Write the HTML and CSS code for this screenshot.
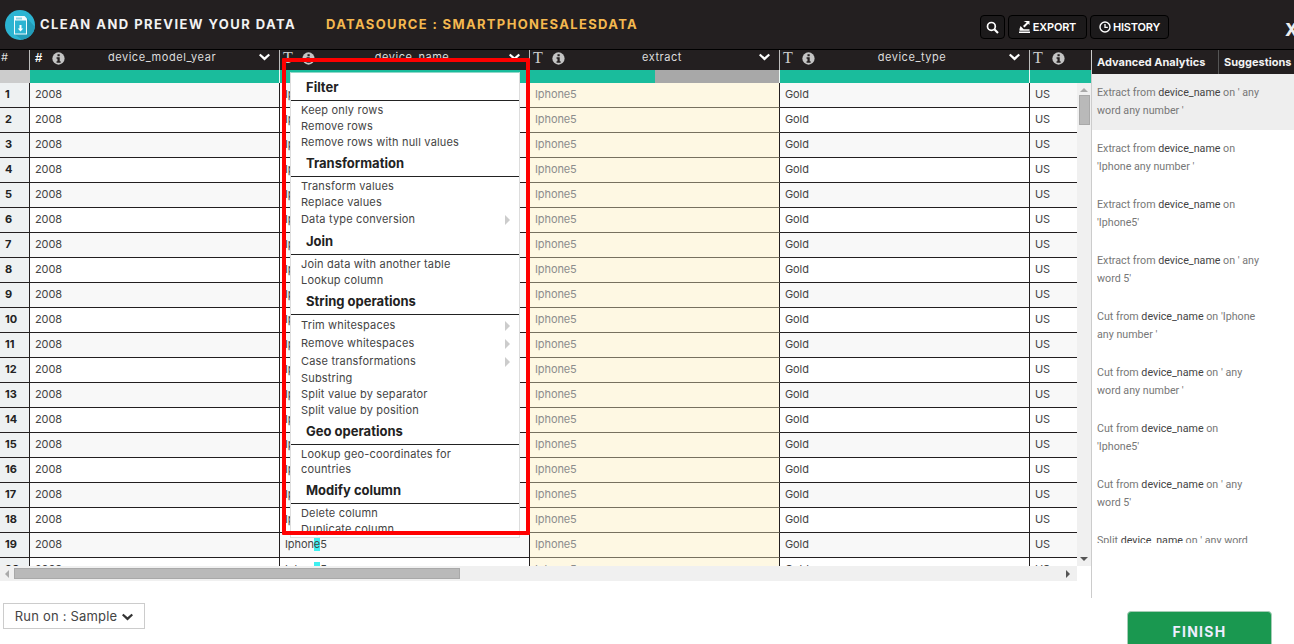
FILE: index.html
```html
<!DOCTYPE html>
<html lang="en">
<head>
    <meta charset="UTF-8">
    <title>Clean and preview your data</title>
    <link rel="stylesheet" href="styles.css">
</head>
<body>
    <svg width="0" height="0" class="defs">
        <symbol id="chev" viewBox="0 0 12 8"><path d="M1.6 0.4 6 4.4 10.4 0.4 12 2.2 6 7.8 0 2.2Z"/></symbol>
        <symbol id="info" viewBox="0 0 14 14"><circle cx="7" cy="7" r="6.6" fill="#c4c4c4"/><rect x="5.9" y="2.4" width="2.4" height="2.2" fill="#231f20"/><path d="M4.9 5.7H8.3V10H9.3V11.5H4.9V10H5.9V7.2H4.9Z" fill="#231f20"/></symbol>
    </svg>

    <header class="topbar">
        <svg class="logo" width="30" height="30" viewBox="0 0 30 30">
            <circle cx="15" cy="15" r="15" fill="#2cb4d2"/>
            <path d="M21 7 30 17A15 15 0 0 1 17 29.8L9 24Z" fill="#239cb8"/>
            <path d="M9 6H19.5L22 8.5V24.500H9Z" fill="#f2fbfd"/>
            <rect x="10" y="10.500" width="11" height="13" fill="#2cb4d2"/>
            <rect x="11" y="7.500" width="6" height="2" fill="#8fd3e3"/>
            <path d="M14.500 15H16.500V18.500H18.300L15.500 21.500 12.700 18.500H14.500Z" fill="#fff"/>
        </svg>
        <h1 class="title">CLEAN AND PREVIEW YOUR DATA</h1>
        <div class="source">DATASOURCE : SMARTPHONESALESDATA</div>
        <div class="actions">
            <button class="tool tool-search">
                <svg width="13" height="13" viewBox="0 0 13 13"><circle cx="5.4" cy="5.4" r="3.9" fill="none" stroke="#fff" stroke-width="1.7"/><path d="M8.3 8.3 12 12" stroke="#fff" stroke-width="2.1"/></svg>
            </button>
            <button class="tool tool-export">
                <svg width="11" height="12" viewBox="0 0 11 12"><path d="M4.500 0H10.500V4L9.200 2.800 5.500 6.500 4 5 7.700 1.500Z M1.500 5 4.700 8.200H10.500V9.800H0.500V8Z M0 10.500H11V12H0Z" fill="#fff"/></svg>
                EXPORT
            </button>
            <button class="tool tool-history">
                <svg width="12" height="12" viewBox="0 0 12 12"><circle cx="6" cy="6" r="5" fill="none" stroke="#fff" stroke-width="1.4"/><path d="M6 3V6.400H8.800" fill="none" stroke="#fff" stroke-width="1.300"/></svg>
                HISTORY
            </button>
        </div>
        <div class="close">X</div>
    </header>

    <div class="workspace">
        <section class="grid">
            <div class="head">
                <div class="hcell hnum">#</div>
                <div class="hcell col"><span class="type type-num">#</span><svg class="info"><use href="#info"/></svg><span class="name">device_model_year</span><svg class="chev"><use href="#chev"/></svg></div>
                <div class="hcell col"><span class="type">T</span><svg class="info"><use href="#info"/></svg><span class="name">device_name</span><svg class="chev"><use href="#chev"/></svg></div>
                <div class="hcell col"><span class="type">T</span><svg class="info"><use href="#info"/></svg><span class="name">extract</span><svg class="chev"><use href="#chev"/></svg></div>
                <div class="hcell col"><span class="type">T</span><svg class="info"><use href="#info"/></svg><span class="name">device_type</span><svg class="chev"><use href="#chev"/></svg></div>
                <div class="hcell col-last"><span class="type">T</span><svg class="info"><use href="#info"/></svg></div>
            </div>
            <div class="quality">
                <div class="q-num"></div>
                <div class="q-col"></div>
                <div class="q-col"></div>
                <div class="q-col q-split"><span class="q-bad"></span></div>
                <div class="q-col"></div>
                <div class="q-last"></div>
            </div>
            <div class="body">
                <div class="rows">
                    <div class="row"><div class="num">1</div><div class="cell">2008</div><div class="cell">Iphon<mark>e</mark>5</div><div class="cell ext">Iphone5</div><div class="cell">Gold</div><div class="cell last">US</div></div>
                    <div class="row"><div class="num">2</div><div class="cell">2008</div><div class="cell">Iphon<mark>e</mark>5</div><div class="cell ext">Iphone5</div><div class="cell">Gold</div><div class="cell last">US</div></div>
                    <div class="row"><div class="num">3</div><div class="cell">2008</div><div class="cell">Iphon<mark>e</mark>5</div><div class="cell ext">Iphone5</div><div class="cell">Gold</div><div class="cell last">US</div></div>
                    <div class="row"><div class="num">4</div><div class="cell">2008</div><div class="cell">Iphon<mark>e</mark>5</div><div class="cell ext">Iphone5</div><div class="cell">Gold</div><div class="cell last">US</div></div>
                    <div class="row"><div class="num">5</div><div class="cell">2008</div><div class="cell">Iphon<mark>e</mark>5</div><div class="cell ext">Iphone5</div><div class="cell">Gold</div><div class="cell last">US</div></div>
                    <div class="row"><div class="num">6</div><div class="cell">2008</div><div class="cell">Iphon<mark>e</mark>5</div><div class="cell ext">Iphone5</div><div class="cell">Gold</div><div class="cell last">US</div></div>
                    <div class="row"><div class="num">7</div><div class="cell">2008</div><div class="cell">Iphon<mark>e</mark>5</div><div class="cell ext">Iphone5</div><div class="cell">Gold</div><div class="cell last">US</div></div>
                    <div class="row"><div class="num">8</div><div class="cell">2008</div><div class="cell">Iphon<mark>e</mark>5</div><div class="cell ext">Iphone5</div><div class="cell">Gold</div><div class="cell last">US</div></div>
                    <div class="row"><div class="num">9</div><div class="cell">2008</div><div class="cell">Iphon<mark>e</mark>5</div><div class="cell ext">Iphone5</div><div class="cell">Gold</div><div class="cell last">US</div></div>
                    <div class="row"><div class="num">10</div><div class="cell">2008</div><div class="cell">Iphon<mark>e</mark>5</div><div class="cell ext">Iphone5</div><div class="cell">Gold</div><div class="cell last">US</div></div>
                    <div class="row"><div class="num">11</div><div class="cell">2008</div><div class="cell">Iphon<mark>e</mark>5</div><div class="cell ext">Iphone5</div><div class="cell">Gold</div><div class="cell last">US</div></div>
                    <div class="row"><div class="num">12</div><div class="cell">2008</div><div class="cell">Iphon<mark>e</mark>5</div><div class="cell ext">Iphone5</div><div class="cell">Gold</div><div class="cell last">US</div></div>
                    <div class="row"><div class="num">13</div><div class="cell">2008</div><div class="cell">Iphon<mark>e</mark>5</div><div class="cell ext">Iphone5</div><div class="cell">Gold</div><div class="cell last">US</div></div>
                    <div class="row"><div class="num">14</div><div class="cell">2008</div><div class="cell">Iphon<mark>e</mark>5</div><div class="cell ext">Iphone5</div><div class="cell">Gold</div><div class="cell last">US</div></div>
                    <div class="row"><div class="num">15</div><div class="cell">2008</div><div class="cell">Iphon<mark>e</mark>5</div><div class="cell ext">Iphone5</div><div class="cell">Gold</div><div class="cell last">US</div></div>
                    <div class="row"><div class="num">16</div><div class="cell">2008</div><div class="cell">Iphon<mark>e</mark>5</div><div class="cell ext">Iphone5</div><div class="cell">Gold</div><div class="cell last">US</div></div>
                    <div class="row"><div class="num">17</div><div class="cell">2008</div><div class="cell">Iphon<mark>e</mark>5</div><div class="cell ext">Iphone5</div><div class="cell">Gold</div><div class="cell last">US</div></div>
                    <div class="row"><div class="num">18</div><div class="cell">2008</div><div class="cell">Iphon<mark>e</mark>5</div><div class="cell ext">Iphone5</div><div class="cell">Gold</div><div class="cell last">US</div></div>
                    <div class="row"><div class="num">19</div><div class="cell">2008</div><div class="cell">Iphon<mark>e</mark>5</div><div class="cell ext">Iphone5</div><div class="cell">Gold</div><div class="cell last">US</div></div>
                    <div class="row"><div class="num">20</div><div class="cell">2008</div><div class="cell">Iphon<mark>e</mark>5</div><div class="cell ext">Iphone5</div><div class="cell">Gold</div><div class="cell last">US</div></div>
                </div>
                <div class="vscroll">
                    <span class="arrow-up"></span>
                    <span class="vthumb"></span>
                    <span class="arrow-down"></span>
                </div>
            </div>
            <div class="hscroll">
                <span class="arrow-left"></span>
                <span class="hthumb"></span>
                <span class="arrow-right"></span>
            </div>
        </section>

        <aside class="side">
            <div class="tabs">
                <div class="tab tab-first">Advanced Analytics</div>
                <div class="tab">Suggestions</div>
            </div>
            <div class="suggestions">
                <div class="sug sug-active">Extract from <b>device_name</b> on ' any word any number '</div>
                <div class="sug">Extract from <b>device_name</b> on 'Iphone any number '</div>
                <div class="sug">Extract from <b>device_name</b> on 'Iphone5'</div>
                <div class="sug">Extract from <b>device_name</b> on ' any word 5'</div>
                <div class="sug">Cut from <b>device_name</b> on 'Iphone any number '</div>
                <div class="sug">Cut from <b>device_name</b> on ' any word any number '</div>
                <div class="sug">Cut from <b>device_name</b> on 'Iphone5'</div>
                <div class="sug">Cut from <b>device_name</b> on ' any word 5'</div>
                <div class="sug">Split <b>device_name</b> on ' any word</div>
            </div>
        </aside>
    </div>

    <footer class="bottom">
        <button class="run">Run on : Sample <svg class="run-chev"><use href="#chev"/></svg></button>
        <button class="finish">FINISH</button>
    </footer>

    <div class="menu">
        <div class="menu-head">Filter</div>
        <ul>
            <li>Keep only rows</li>
            <li>Remove rows</li>
            <li>Remove rows with null values</li>
        </ul>
        <div class="menu-head">Transformation</div>
        <ul>
            <li>Transform values</li>
            <li>Replace values</li>
            <li class="sub">Data type conversion</li>
        </ul>
        <div class="menu-head">Join</div>
        <ul>
            <li>Join data with another table</li>
            <li>Lookup column</li>
        </ul>
        <div class="menu-head">String operations</div>
        <ul>
            <li class="sub">Trim whitespaces</li>
            <li class="sub">Remove whitespaces</li>
            <li class="sub">Case transformations</li>
            <li>Substring</li>
            <li>Split value by separator</li>
            <li>Split value by position</li>
        </ul>
        <div class="menu-head">Geo operations</div>
        <ul>
            <li class="wrap">Lookup geo-coordinates for countries</li>
        </ul>
        <div class="menu-head">Modify column</div>
        <ul>
            <li>Delete column</li>
            <li>Duplicate column</li>
        </ul>
    </div>
    <div class="callout"></div>
</body>
</html>
```
FILE: styles.css
```css
* {
    box-sizing: border-box;
}
html, body {
    height: 100%;
}
body {
    margin: 0;
    height: 644px;
    overflow: hidden;
    position: relative;
    background-color: #fff;
    color: #444;
    font-family: "Inter", "Liberation Sans", sans-serif;
    font-size: 11px;
}
.defs {
    position: absolute;
}

/* top bar */
.topbar {
    height: 50px;
    display: flex;
    align-items: flex-start;
    background-color: #231f20;
    border-bottom: 1px solid #000;
    overflow: hidden;
}
.logo {
    margin: 10px 0 0 5px;
    flex: none;
}
.title {
    margin: 16px 0 0 5px;
    width: 286px;
    flex: none;
    font-size: 13px;
    line-height: 16px;
    font-weight: 700;
    letter-spacing: 1.45px;
    color: #f2f2f2;
}
.source {
    margin-top: 16px;
    width: 654px;
    flex: none;
    font-size: 13px;
    line-height: 16px;
    font-weight: 700;
    letter-spacing: 1.35px;
    color: #f4b84f;
}
.actions {
    display: flex;
    gap: 3px;
    margin-top: 15px;
    flex: none;
}
.tool {
    height: 24px;
    padding: 0;
    display: flex;
    align-items: center;
    justify-content: center;
    gap: 3px;
    border: 1px solid #000;
    border-radius: 4px;
    background-color: #1c1a1b;
    color: #fff;
    font-family: "Inter", sans-serif;
    font-size: 11px;
    font-weight: 600;
    letter-spacing: -.2px;
}
.tool-search {
    width: 25px;
}
.tool-export {
    width: 79px;
}
.tool-history {
    width: 79px;
    gap: 2px;
}
.close {
    margin: 20px 0 0 116px;
    font-size: 17px;
    line-height: 20px;
    font-weight: 800;
    color: #eee;
}

/* grid */
.workspace {
    height: 548px;
    display: flex;
}
.grid {
    width: 1091px;
    flex: none;
    overflow: hidden;
}
.head {
    display: flex;
    height: 20px;
    background-color: #231f20;
    color: #ddd;
}
.hcell {
    height: 20px;
    flex: none;
    display: flex;
    align-items: flex-start;
    border-right: 1px solid #bbb;
}
.hnum {
    width: 30px;
    padding: 0 0 0 1px;
    font-size: 11px;
    line-height: 15px;
}
.col {
    width: 250px;
    padding-left: 3px;
}
.col-last {
    width: 61px;
    padding-left: 3px;
    border-right: 0;
}
.type {
    width: 14px;
    font-family: "Liberation Serif", serif;
    font-size: 16px;
    line-height: 16px;
    font-weight: 400;
    color: #ccc;
}
.type-num {
    font-family: "Liberation Sans", sans-serif;
    font-size: 13px;
    font-weight: 700;
    color: #fff;
    margin-left: 2px;
    width: 12px;
}
.info {
    width: 13px;
    height: 13px;
    margin: 2px 0 0 5px;
    flex: none;
}
.name {
    flex: 1;
    text-align: center;
    font-size: 11px;
    line-height: 15px;
    letter-spacing: .55px;
}
.chev {
    width: 11px;
    height: 8px;
    margin: 3px 9px 0 0;
    fill: #fff;
    flex: none;
}
.quality {
    display: flex;
    height: 13px;
    background-color: #1abc9c;
}
.q-num {
    width: 30px;
    background-color: #ccc;
}
.q-col {
    width: 250px;
    border-right: 1px solid #e8f8f4;
}
.q-last {
    flex: 1;
}
.q-split {
    display: flex;
    justify-content: flex-end;
}
.q-bad {
    width: 124px;
    background-color: #a8a8a8;
}
.body {
    display: flex;
    height: 483px;
    overflow: hidden;
}
.rows {
    width: 1077px;
    flex: none;
    overflow: hidden;
}
.row {
    display: flex;
    height: 25px;
    background-color: #fff;
}
.row:nth-child(odd) {
    background-color: #f8f8f8;
}
.num {
    width: 30px;
    flex: none;
    padding-left: 5px;
    font-weight: 700;
    font-size: 11px;
    line-height: 23px;
    color: #222;
    background-color: #eef1f2;
    border-right: 1px solid #231f20;
    border-bottom: 1px solid #231f20;
}
.cell {
    width: 250px;
    flex: none;
    padding-left: 5px;
    font-size: 11px;
    line-height: 23px;
    letter-spacing: -.1px;
    color: #444;
    border-right: 1px solid #231f20;
    border-bottom: 1px solid #231f20;
}
.ext {
    color: #8c8c8c;
    background-color: #fef8e3;
    border-bottom-color: #77715f;
}
.last {
    flex: 1;
    border-right: 0;
}
mark {
    background-color: #3ff0f0;
    color: inherit;
}
.vscroll {
    width: 14px;
    height: 483px;
    flex: none;
    display: flex;
    flex-direction: column;
    align-items: center;
    background-color: #f0f0f0;
    padding-top: 5px;
}
.vthumb {
    width: 11px;
    height: 30px;
    margin-top: 3px;
    background-color: #b9b9b9;
    border: 1px solid #a9a9a9;
}
.arrow-up {
    border: 4px solid transparent;
    border-top: 0;
    border-bottom: 4px solid #aaa;
}
.arrow-down {
    margin-top: auto;
    margin-bottom: 5px;
    border: 4px solid transparent;
    border-bottom: 0;
    border-top: 4px solid #555;
}
.hscroll {
    height: 15px;
    width: 1077px;
    display: flex;
    align-items: center;
    padding: 0 7px 0 5px;
    background-color: #f0f0f0;
}
.hthumb {
    width: 446px;
    height: 11px;
    margin-left: 5px;
    background-color: #b9b9b9;
    border: 1px solid #a9a9a9;
}
.arrow-left {
    border: 4px solid transparent;
    border-left: 0;
    border-right: 4px solid #aaa;
}
.arrow-right {
    margin-left: auto;
    border: 4px solid transparent;
    border-right: 0;
    border-left: 4px solid #555;
}

/* right panel */
.side {
    flex: 1;
    border-left: 1px solid #ccc;
    overflow: hidden;
}
.tabs {
    display: flex;
    height: 24px;
    background-color: #231f20;
}
.tab {
    padding: 5px 0 0 5px;
    font-size: 11px;
    line-height: 14px;
    font-weight: 700;
    color: #f2f2f2;
    white-space: nowrap;
}
.tab-first {
    width: 127px;
    border-right: 1px solid #555;
}
.suggestions {
    height: 469px;
    overflow: hidden;
}
.sug {
    height: 56px;
    padding: 10px 33px 0 5px;
    font-family: "Roboto", sans-serif;
    font-size: 10.7px;
    line-height: 18px;
    color: #777;
}
.sug b {
    font-weight: 400;
    color: #444;
}
.sug-active {
    background-color: #eee;
}

/* bottom */
.bottom {
    height: 46px;
    display: flex;
    justify-content: space-between;
    align-items: flex-start;
}
.run {
    margin: 5px 0 0 3px;
    width: 142px;
    height: 26px;
    padding: 0;
    background-color: #fff;
    border: 1px solid #ccc;
    color: #444;
    font-family: "Inter", sans-serif;
    font-size: 13px;
    letter-spacing: .2px;
}
.run-chev {
    width: 11px;
    height: 8px;
    margin-left: 1px;
    fill: #333;
}
.finish {
    margin: 13px 22px 0 0;
    width: 145px;
    height: 40px;
    padding: 0;
    background-color: #1a9850;
    border: 1px solid #a6cdb6;
    border-radius: 4px;
    color: #eef;
    font-family: "Inter", sans-serif;
    font-size: 14px;
    font-weight: 700;
    letter-spacing: 1.3px;
}

/* column menu overlay */
.menu {
    position: absolute;
    left: 290px;
    top: 72px;
    width: 230px;
    height: 466px;
    padding-top: 1px;
    overflow: hidden;
    background-color: #fff;
    border: 1px solid #ddd;
    border-top-color: #8fd8c8;
}
.menu-head {
    height: 27px;
    padding: 6px 0 0 15px;
    font-size: 13px;
    line-height: 15px;
    font-weight: 700;
    color: #222;
    border-bottom: 1px solid #222;
}
.menu ul {
    margin: 0;
    padding: 1px 0 0;
    list-style: none;
}
.menu li {
    height: 16px;
    padding: 0 10px;
    font-size: 11px;
    line-height: 16px;
    letter-spacing: .18px;
    color: #444;
    position: relative;
}
.menu li.sub {
    height: 18px;
    line-height: 18px;
}
.menu li.sub::after {
    content: "";
    position: absolute;
    right: 9px;
    top: 5px;
    border: 5px solid transparent;
    border-right: 0;
    border-left: 5px solid #ccc;
}
.menu li.wrap {
    height: 31px;
    width: 190px;
    padding-top: 1px;
    line-height: 15px;
}
.callout {
    position: absolute;
    left: 282px;
    top: 58px;
    width: 248px;
    height: 477px;
    border: 4.5px solid #f00;
    border-radius: 1px;
}
```
